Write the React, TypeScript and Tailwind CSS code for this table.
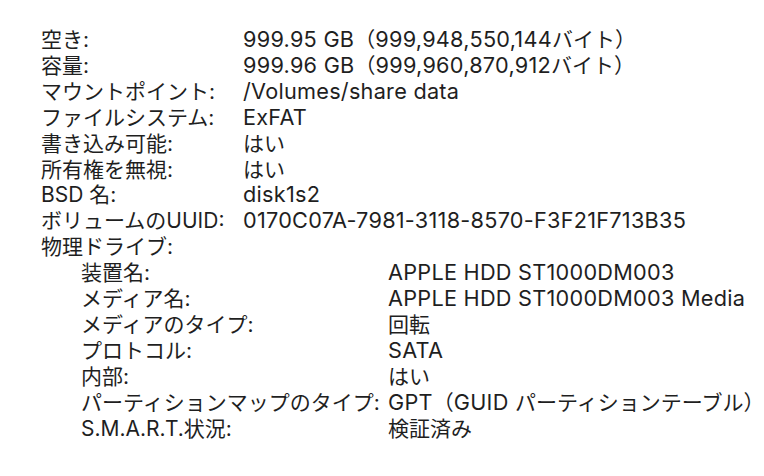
const volumeRows: [string, string][] = [
  ['空き:', '999.95 GB（999,948,550,144バイト）'],
  ['容量:', '999.96 GB（999,960,870,912バイト）'],
  ['マウントポイント:', '/Volumes/share data'],
  ['ファイルシステム:', 'ExFAT'],
  ['書き込み可能:', 'はい'],
  ['所有権を無視:', 'はい'],
  ['BSD 名:', 'disk1s2'],
  ['ボリュームのUUID:', '0170C07A-7981-3118-8570-F3F21F713B35'],
];

const driveRows: [string, string][] = [
  ['装置名:', 'APPLE HDD ST1000DM003'],
  ['メディア名:', 'APPLE HDD ST1000DM003 Media'],
  ['メディアのタイプ:', '回転'],
  ['プロトコル:', 'SATA'],
  ['内部:', 'はい'],
  ['パーティションマップのタイプ:', 'GPT（GUID パーティションテーブル）'],
  ['S.M.A.R.T.状況:', '検証済み'],
];

// latin runs get a slightly larger size so they sit wider, like the system font
function Mixed({ text }: { text: string }) {
  const parts = text.split(/([\u3000-\u30ff\u4e00-\u9fff\uff00-\uffef]+)/);
  return (
    <span>
      {parts.map((p, i) =>
        i % 2 === 1 ? (
          <span key={i}>{p}</span>
        ) : (
          <span key={i} className="text-[21.7px] tracking-[0.25px]">
            {p}
          </span>
        )
      )}
    </span>
  );
}

export default function App() {
  return (
    <div
      className="w-[764px] h-[476px] bg-white text-[#1f1f1f] text-[21px] leading-[25.9px] pt-[27px] pl-[41px]"
      style={{ fontFamily: 'Inter, "Noto Sans CJK JP", sans-serif' }}
    >
      {volumeRows.map(([label, value]) => (
        <div key={label} className="grid grid-cols-[202px_1fr] whitespace-nowrap">
          <span>{label}</span>
          <Mixed text={value} />
        </div>
      ))}

      <div className="whitespace-nowrap">物理ドライブ:</div>

      {/* nested drive info */}
      <div className="pl-[40px]">
        {driveRows.map(([label, value]) => (
          <div key={label} className="grid grid-cols-[307px_1fr] whitespace-nowrap">
            <span>{label}</span>
            <Mixed text={value} />
          </div>
        ))}
      </div>
    </div>
  );
}
